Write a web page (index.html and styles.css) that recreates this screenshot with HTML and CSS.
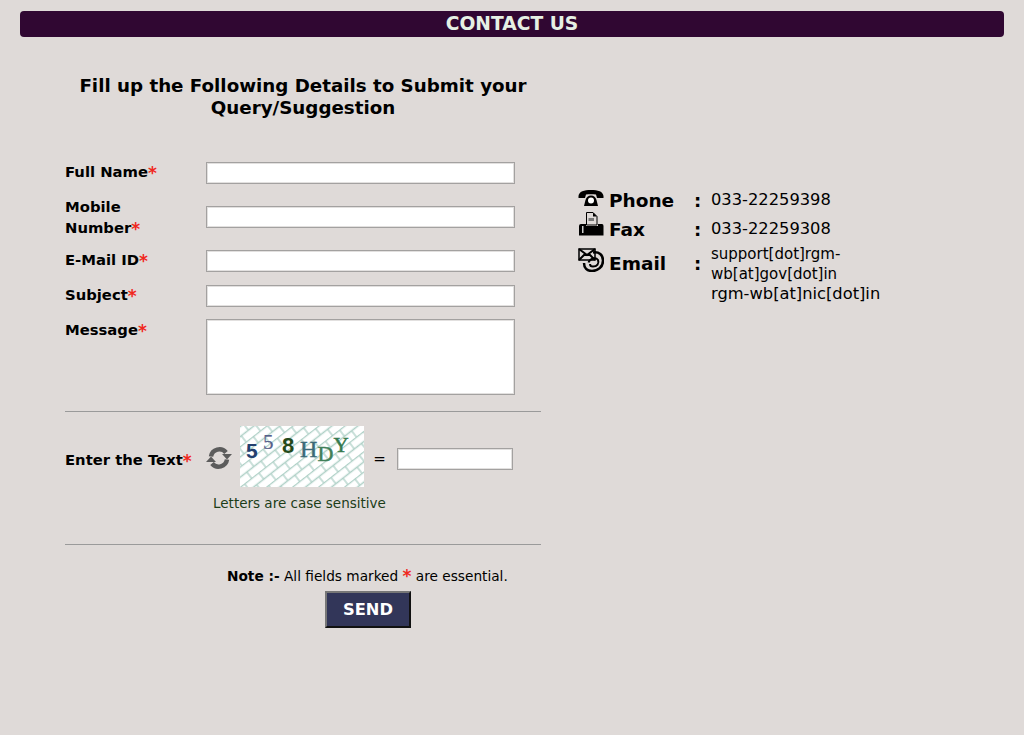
FILE: index.html
```html
<!DOCTYPE html>
<html>
<head>
	<meta charset="utf-8">
	<title>Contact Us</title>
	<link rel="stylesheet" href="styles.css">
</head>
<body>
<h1 class="page_title">CONTACT US</h1>
<div class="columns">
	<form class="left">
		<h2 class="form_title">Fill up the Following Details to Submit your Query/Suggestion</h2>
		<div class="fields">
			<div class="row row_name">
				<label>Full Name<span class="req">*</span></label>
				<input type="text">
			</div>
			<div class="row row_mobile">
				<label>Mobile Number<span class="req">*</span></label>
				<input type="text">
			</div>
			<div class="row row_email">
				<label>E-Mail ID<span class="req">*</span></label>
				<input type="text">
			</div>
			<div class="row row_subject">
				<label>Subject<span class="req">*</span></label>
				<input type="text">
			</div>
			<div class="row row_message">
				<label>Message<span class="req">*</span></label>
				<textarea></textarea>
			</div>
		</div>
		<hr class="first_rule">
		<div class="captcha_row">
			<label>Enter the Text<span class="req">*</span></label>
			<svg class="refresh" viewBox="0 0 26 26" width="26" height="26">
				<path d="M5 11.500 A8.500 8.500 0 0 1 20 7.500" fill="none" stroke="#5c5c5c" stroke-width="4.500"/>
				<path d="M16 9 H26 L21 14.500 Z" fill="#5c5c5c"/>
				<path d="M21 14.500 A8.500 8.500 0 0 1 6 18.500" fill="none" stroke="#5c5c5c" stroke-width="4.500"/>
				<path d="M10 17 H0 L5 11.500 Z" fill="#5c5c5c"/>
			</svg>
			<svg class="captcha" viewBox="0 0 124 61" width="124" height="61">
				<defs>
					<pattern id="bricks" width="18" height="16" patternUnits="userSpaceOnUse" patternTransform="rotate(-38)">
						<path d="M0 .5H18M4 .5V8.500M0 8.500H18M13 8.500V16.500" stroke="#aed0c6" stroke-width="1.300" fill="none"/>
					</pattern>
				</defs>
				<rect width="124" height="61" fill="#fff"/>
				<rect width="124" height="61" fill="url(#bricks)"/>
				<text x="6" y="32" class="cap_a">5</text>
				<text x="23" y="23" class="cap_b">5</text>
				<text x="42" y="27" class="cap_c">8</text>
				<text x="60" y="31" class="cap_d">H</text>
				<text x="77.500" y="35" class="cap_e">D</text>
				<text x="93.500" y="26" class="cap_f">Y</text>
			</svg>
			<span class="equals">=</span>
			<input type="text" class="captcha_input">
		</div>
		<p class="case_note">Letters are case sensitive</p>
		<hr class="second_rule">
		<p class="note"><b>Note :-</b> All fields marked <span class="req big">*</span> are essential.</p>
		<div class="send_wrap"><button type="button" class="send">SEND</button></div>
	</form>
	<div class="right">
		<div class="contact contact_phone">
			<svg class="icon" viewBox="0 0 26 20" width="26" height="20">
				<path d="M.5 7 C1 2.500 6 1 13 1 C20 1 25 2.500 25.500 7 L25.500 9 L19 9 L18 5.500 C15 5 11 5 8 5.500 L7 9 L.5 9 Z" fill="#000"/>
				<path d="M6 17 L7.500 11 C8.500 8 10 6.500 13 6.500 C16 6.500 17.500 8 18.500 11 L20 17 Z" fill="#000"/>
				<circle cx="13" cy="11.500" r="3" fill="#fff"/>
			</svg>
			<span class="name">Phone</span>
			<span class="colon">:</span>
			<span class="value">033-22259398</span>
		</div>
		<div class="contact contact_fax">
			<svg class="icon" viewBox="0 0 26 24" width="26" height="24">
				<path d="M8.500 .5 H15 L19 4.500 V13 H8.500 Z" fill="#dfdad8" stroke="#000"/>
				<path d="M15 .5 V4.500 H19 Z" fill="#000"/>
				<path d="M10.500 6 H16 V9 H10.500 Z" fill="#777"/>
				<path d="M1 14 Q1 12 3 12 H8 V14 H20 V12 H24 Q25.500 12 25.500 14 V23.500 H1 Z" fill="#000"/>
				<rect x="4" y="14" width="1.500" height="7" fill="#ccc"/>
			</svg>
			<span class="name">Fax</span>
			<span class="colon">:</span>
			<span class="value">033-22259308</span>
		</div>
		<div class="contact contact_email">
			<svg class="icon" viewBox="0 0 26 24" width="26" height="24">
				<path d="M1 1 H17 V12 H1 Z" fill="#dfdad8" stroke="#000" stroke-width="1.500"/>
				<path d="M1 1 L9 7 L17 1 M1 12 L7 6 M17 12 L11 6" fill="none" stroke="#000" stroke-width="2"/>
				<path d="M15 4.500 C21 3.500 25 7 25 12.500 C25 19 20 23 14 23 C9 23 6 20 6 15" fill="none" stroke="#000" stroke-width="2.500"/>
				<path d="M10.500 14.500 C12 10 18 9 20 12 C21.500 15.500 19 18.500 15 18.500 C13 18.500 12 17.500 12 16" fill="none" stroke="#000" stroke-width="2"/>
			</svg>
			<span class="name">Email</span>
			<span class="colon">:</span>
			<span class="value"><span class="small">support[dot]rgm-wb[at]gov[dot]in</span><br>rgm-wb[at]nic[dot]in</span>
		</div>
	</div>
</div>
</body>
</html>
```

FILE: styles.css
```css
body {
	margin: 0;
	background: #dfdad8;
	font-family: "DejaVu Sans", Verdana, sans-serif;
	color: #000;
}
.page_title {
	margin: 11px 20px 0;
	height: 26px;
	background: #300732;
	border-radius: 4px;
	color: #e6f0e4;
	font-size: 18.700px;
	line-height: 25px;
	text-align: center;
}
.columns {
	display: flex;
	padding-left: 65px;
}
.left {
	width: 476px;
}
.form_title {
	margin: 38px 0 0;
	font-size: 18.250px;
	line-height: 22px;
	text-align: center;
}
.fields {
	margin-top: 43px;
}
.row {
	display: flex;
	align-items: center;
}
.row label {
	box-sizing: border-box;
	width: 141px;
	padding-right: 20px;
	font-size: 14.800px;
	font-weight: bold;
	line-height: 21px;
}
.row_name label, .row_email label, .row_subject label {
	line-height: 18px;
	padding-bottom: 3px;
}
.row input, .row textarea, .captcha_input {
	box-sizing: border-box;
	width: 309px;
	height: 22px;
	margin: 0;
	padding: 2px;
	background: #fff;
	border: 1px solid #a3a1a0;
	box-shadow: inset 0 0 0 1px #e2e0df;
	border-radius: 0;
	display: block;
	resize: none;
}
.row_subject {
	margin-top: 13px;
}
.row_mobile {
	margin-top: 22px;
	height: 22px;
}
.row_email {
	margin-top: 22px;
}
.row_message {
	margin-top: 12px;
	align-items: flex-start;
}
.row_message textarea {
	height: 76px;
}
hr {
	margin: 0;
	border: 0;
	border-top: 1px solid #9a9a9a;
}
.first_rule {
	margin-top: 16px;
}
.captcha_row {
	display: flex;
	align-items: center;
	margin-top: 14px;
	height: 61px;
}
.captcha_row label {
	width: 141px;
	font-size: 14.800px;
	font-weight: bold;
	margin-top: 6px;
}
.refresh {
	margin-top: 3px;
}
.captcha {
	margin-left: 8px;
}
.equals {
	margin-left: 4px;
	width: 23px;
	font-size: 15px;
	margin-top: 5px;
	text-align: center;
}
.row input.captcha_input, .captcha_input {
	width: 116px;
	margin-left: 6px;
	margin-top: 4px;
}
.cap_b, .cap_d, .cap_e, .cap_f {
	font-family: "Liberation Serif", serif;
	stroke-width: .5px;
}
.cap_a { fill: #22406f; font-family: "Liberation Sans", sans-serif; font-weight: bold; font-size: 21px; }
.cap_b { fill: #56608a; stroke: #56608a; stroke-width: .2px; font-size: 21px; }
.cap_c { fill: #24491a; font-family: "Liberation Sans", sans-serif; font-weight: bold; font-size: 22px; }
.cap_d { fill: #3c6a78; stroke: #3c6a78; font-size: 24px; }
.cap_e { fill: #3f8058; stroke: #3f8058; font-size: 22px; }
.cap_f { fill: #357a4d; stroke: #357a4d; font-size: 21px; }
.case_note {
	margin: 8px 0 0 148px;
	font-size: 13.500px;
	line-height: 16px;
	color: #1c3d18;
}
.second_rule {
	margin-top: 33px;
}
.note {
	margin: 22px 0 0 162px;
	font-size: 13.700px;
	line-height: 18px;
}
.req {
	color: #f0281e;
}
label .req {
	font-size: 17px;
	line-height: 0;
	vertical-align: -2px;
}
.big {
	font-size: 17px;
	line-height: 12px;
	font-weight: bold;
	position: relative;
	top: 1px;
}
.send_wrap {
	margin-top: 6px;
	padding-left: 260px;
}
.send {
	box-sizing: border-box;
	width: 86px;
	height: 37px;
	background: #323659;
	border: 2px solid;
	border-color: #777 #111 #111 #777;
	color: #fff;
	font-family: "DejaVu Sans", Verdana, sans-serif;
	font-size: 16.300px;
	font-weight: bold;
	padding: 0;
}
.right {
	margin: 150px 0 0 37px;
	width: 320px;
}
.contact {
	display: flex;
	align-items: center;
}
.icon {
	flex: none;
	align-self: flex-start;
}
.name {
	width: 85px;
	margin-left: 5px;
	font-size: 18.500px;
	font-weight: bold;
}
.colon {
	width: 17px;
	font-size: 18px;
	font-weight: bold;
}
.value {
	width: 180px;
	font-size: 16.300px;
	line-height: 20px;
}
.small {
	font-size: 15px;
}
.contact_phone {
	height: 26px;
}
.contact_phone .icon {
	margin-top: 2px;
}
.contact_fax {
	height: 26px;
	margin-top: 3px;
}
.contact_fax .icon {
	margin-top: -4px;
}
.contact_email {
	margin-top: 2px;
	align-items: flex-start;
}
.contact_email .icon {
	margin-top: 4px;
}
.contact_email .name, .contact_email .colon {
	margin-top: 9px;
}
```
